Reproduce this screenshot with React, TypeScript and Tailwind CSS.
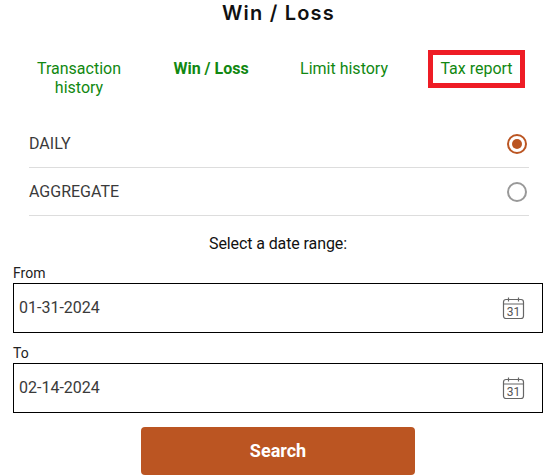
const tabs = [
  { label: 'Transaction history', width: 'w-[100px]' },
  { label: 'Win / Loss', width: 'w-[100px]', active: true },
  { label: 'Limit history', width: 'w-[110px]' },
  { label: 'Tax report', width: 'w-[97px]', boxed: true },
];

function CalendarIcon() {
  return (
    <svg width="24" height="24" viewBox="0 0 24 24" fill="none" stroke="#666" strokeWidth="1.2" className="shrink-0">
      <rect x="2.5" y="3.5" width="20" height="19" rx="2.5" />
      <path d="M2.5 8h20M7.5 1.5v4M17.5 1.5v4" />
      <text x="12.5" y="20" textAnchor="middle" fontSize="12" fill="#555" stroke="none" fontFamily="Roboto, sans-serif">31</text>
    </svg>
  );
}

function Radio({ checked }: { checked?: boolean }) {
  return (
    <span className={`flex h-5 w-5 items-center justify-center rounded-full border-2 ${checked ? 'border-[#bb5522]' : 'border-[#999999]'}`}>
      {checked && <span className="h-[10px] w-[10px] rounded-full bg-[#bb5522]" />}
    </span>
  );
}

function DateField({ label, value }: { label: string; value: string }) {
  return (
    <div className="flex flex-col">
      <label className="h-[20px] text-[14px] leading-[20px] text-[#222]">{label}</label>
      <div className="flex h-[50px] items-center justify-between border border-black pl-[5px] pr-[17px]">
        <span className="text-[16px] text-[#3a3a3a]">{value}</span>
        <CalendarIcon />
      </div>
    </div>
  );
}

export default function App() {
  return (
    <div className="h-[475px] w-[549px] overflow-hidden bg-white font-['Roboto',sans-serif]">
      <h1 className="pt-[1px] pl-[8px] text-center font-['Inter',sans-serif] text-[20px] leading-[24px] font-semibold tracking-[1.2px] text-[#111]">
        Win / Loss
      </h1>

      <div className="mt-[25px] flex h-[70px] pl-[24px]">
        {tabs.map((tab, i) => (
          <div
            key={tab.label}
            className={`${tab.width} h-[38px] text-center text-[16px] leading-[19px] text-[#118811] ${
              i === 0 ? 'ml-[5px]' : i === 1 ? 'ml-[32px]' : i === 2 ? 'ml-[28px]' : i === 3 ? 'ml-[29px]' : ''
            } ${tab.active ? 'font-bold' : ''} ${tab.boxed ? 'border-[5px] border-[#ee1c25]' : 'pt-[9px]'}`}
          >
            <span className={tab.boxed ? 'block pt-[4px]' : ''}>{tab.label}</span>
          </div>
        ))}
      </div>

      <div className="ml-[29px] mr-[20px]">
        <div className="flex h-[48px] items-center justify-between border-b border-[#dddddd] pr-[2px] text-[16px] text-[#3a3a3a]">
          DAILY
          <Radio checked />
        </div>
        <div className="flex h-[48px] items-center justify-between border-b border-[#dddddd] pr-[2px] text-[16px] text-[#3a3a3a]">
          AGGREGATE
          <Radio />
        </div>
      </div>

      <p className="mt-[18px] pl-[7px] text-center text-[16px] leading-[20px] tracking-[-0.1px] text-[#111]">Select a date range:</p>

      <div className="mx-[13px] mt-[9px] mr-[6px] flex flex-col gap-[10px]">
        <DateField label="From" value="01-31-2024" />
        <DateField label="To" value="02-14-2024" />
      </div>

      <div className="mt-[14px] flex justify-center pl-[7px]">
        <button className="h-[48px] w-[274px] rounded-[4px] bg-[#bb5522] pb-[2px] text-[18px] font-bold text-white">Search</button>
      </div>
    </div>
  );
}
